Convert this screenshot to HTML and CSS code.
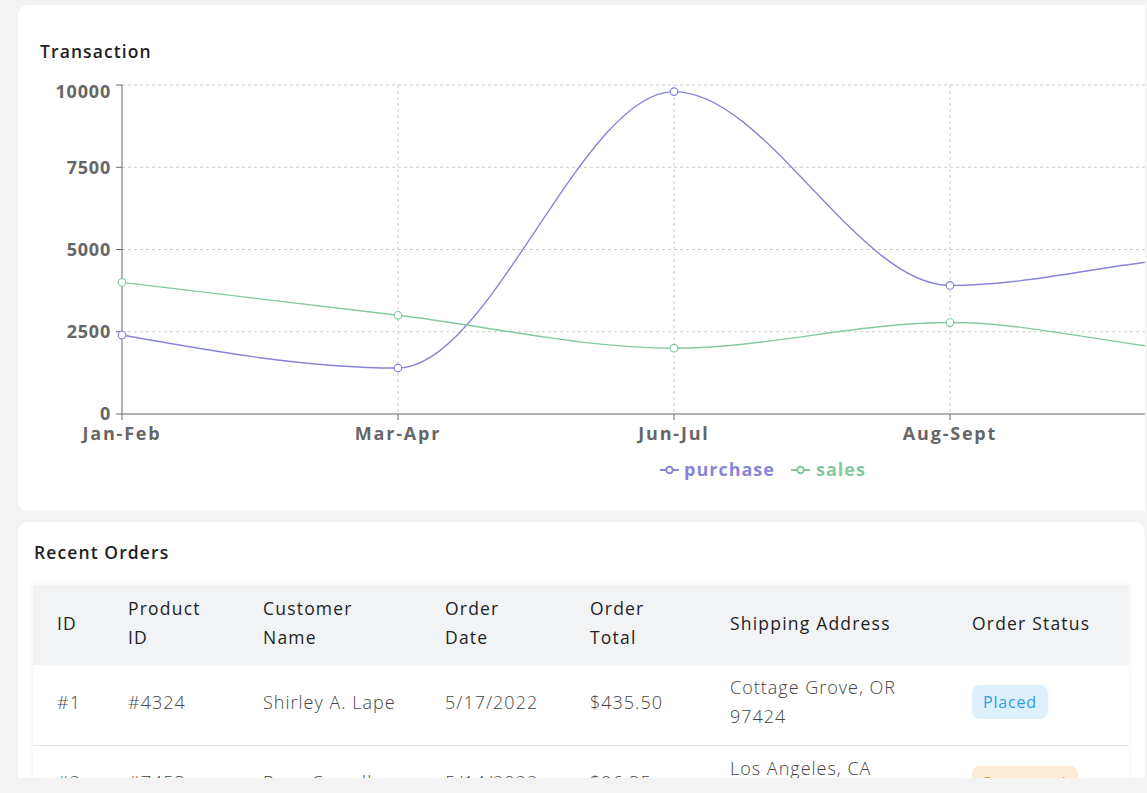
FILE: index.html
```html
<!DOCTYPE html>
<html lang="en">
<head>
<meta charset="utf-8">
<title>Dashboard</title>
<link rel="stylesheet" href="styles.css">
</head>
<body>
<div class="page">
  <div class="scroll">
    <section class="card card-chart">
      <h2 class="card-title">Transaction</h2>
      <svg class="chart" width="1800" height="430" viewBox="40 70 1800 430" xmlns="http://www.w3.org/2000/svg">
        <g class="grid" stroke="#ccc" stroke-dasharray="3 3" fill="none">
          <line x1="122" y1="85" x2="1840" y2="85"/>
          <line x1="122" y1="167.25" x2="1840" y2="167.25"/>
          <line x1="122" y1="249.5" x2="1840" y2="249.5"/>
          <line x1="122" y1="331.75" x2="1840" y2="331.75"/>
          <line x1="398" y1="85" x2="398" y2="414"/>
          <line x1="674" y1="85" x2="674" y2="414"/>
          <line x1="950" y1="85" x2="950" y2="414"/>
          <line x1="1226" y1="85" x2="1226" y2="414"/>
          <line x1="1502" y1="85" x2="1502" y2="414"/>
        </g>
        <g class="axis" stroke="#666" fill="none">
          <line x1="122" y1="85" x2="122" y2="414"/>
          <line x1="122" y1="414" x2="1840" y2="414"/>
          <line x1="116" y1="85" x2="122" y2="85"/>
          <line x1="116" y1="167.25" x2="122" y2="167.25"/>
          <line x1="116" y1="249.5" x2="122" y2="249.5"/>
          <line x1="116" y1="331.75" x2="122" y2="331.75"/>
          <line x1="116" y1="414" x2="122" y2="414"/>
          <line x1="122" y1="414" x2="122" y2="420"/>
          <line x1="398" y1="414" x2="398" y2="420"/>
          <line x1="674" y1="414" x2="674" y2="420"/>
          <line x1="950" y1="414" x2="950" y2="420"/>
          <line x1="1226" y1="414" x2="1226" y2="420"/>
        </g>
        <g class="ylabels">
          <text x="111" y="98">10000</text>
          <text x="111" y="174">7500</text>
          <text x="111" y="256">5000</text>
          <text x="111" y="338">2500</text>
          <text x="111" y="420">0</text>
        </g>
        <g class="xlabels">
          <text x="122" y="440">Jan-Feb</text>
          <text x="398" y="440">Mar-Apr</text>
          <text x="674" y="440">Jun-Jul</text>
          <text x="950" y="440">Aug-Sept</text>
          <text x="1226" y="440">Oct-Nov</text>
        </g>
        <path class="line-purchase" d="M122,335.04C214,351.53,306,368.01,398,368.01C490,368.01,582,91.58,674,91.58C766,91.58,858,285.43,950,285.43C1042,285.43,1134,256.08,1226,256.08C1318,256.08,1410,288.98,1502,288.98C1594,288.98,1686,280.76,1778,272.53"/>
        <path class="line-sales" d="M122,282.4C214,293.37,306,304.33,398,315.3C490,326.27,582,348.2,674,348.2C766,348.2,858,322.54,950,322.54C1042,322.54,1134,351.82,1226,351.82C1318,351.82,1410,344.14,1502,335.37C1594,326.6,1686,312.89,1778,299.18"/>
        <g class="dots-purchase">
          <circle cx="122" cy="335.04" r="3.8"/>
          <circle cx="398" cy="368.01" r="3.8"/>
          <circle cx="674" cy="91.58" r="3.8"/>
          <circle cx="950" cy="285.43" r="3.8"/>
          <circle cx="1226" cy="256.08" r="3.8"/>
        </g>
        <g class="dots-sales">
          <circle cx="122" cy="282.4" r="3.8"/>
          <circle cx="398" cy="315.3" r="3.8"/>
          <circle cx="674" cy="348.2" r="3.8"/>
          <circle cx="950" cy="322.54" r="3.8"/>
          <circle cx="1226" cy="351.82" r="3.8"/>
        </g>
        <g class="legend">
          <g class="legend-purchase">
            <line x1="660" y1="470" x2="679" y2="470"/>
            <circle cx="669.5" cy="470" r="3.2"/>
            <text x="684" y="476">purchase</text>
          </g>
          <g class="legend-sales">
            <line x1="791" y1="470" x2="810" y2="470"/>
            <circle cx="800.5" cy="470" r="3.2"/>
            <text x="816" y="476">sales</text>
          </g>
        </g>
      </svg>
    </section>

    <section class="card card-orders">
      <h2 class="card-title">Recent Orders</h2>
      <div class="table-wrap">
        <table class="orders">
          <colgroup>
            <col class="c-id"><col class="c-pid"><col class="c-cust"><col class="c-date"><col class="c-total"><col class="c-addr"><col class="c-status">
          </colgroup>
          <thead>
            <tr>
              <th>ID</th>
              <th>Product<br>ID</th>
              <th>Customer<br>Name</th>
              <th>Order<br>Date</th>
              <th>Order<br>Total</th>
              <th>Shipping Address</th>
              <th>Order Status</th>
            </tr>
          </thead>
          <tbody>
            <tr>
              <td>#1</td>
              <td>#4324</td>
              <td>Shirley A. Lape</td>
              <td>5/17/2022</td>
              <td>$435.50</td>
              <td>Cottage Grove, OR<br>97424</td>
              <td><span class="badge badge-placed">Placed</span></td>
            </tr>
            <tr>
              <td>#2</td>
              <td>#7453</td>
              <td>Ryan Carroll</td>
              <td>5/14/2022</td>
              <td>$96.35</td>
              <td>Los Angeles, CA<br>90017</td>
              <td><span class="badge badge-processed">Processed</span></td>
            </tr>
          </tbody>
        </table>
      </div>
    </section>
  </div>
</div>
</body>
</html>
```

FILE: styles.css
```css
html, body {
  margin: 0;
  padding: 0;
  overflow: hidden;
  background: #f3f3f3;
}

body {
  font-family: "Open Sans", "Noto Sans", sans-serif;
  color: #222;
}

.page {
  width: 1147px;
  height: 793px;
  padding: 5px 2px 0 18px;
  box-sizing: border-box;
  overflow: hidden;
}

.scroll {
  height: 773px;
  overflow: hidden;
  display: flex;
  flex-direction: column;
  gap: 11px;
}

.card {
  background: #fff;
  border-radius: 10px;
  flex-shrink: 0;
}

.card-chart {
  width: 1400px;
  height: 506px;
  box-sizing: border-box;
  padding: 33px 0 0 22px;
  overflow: hidden;
}

.card-title {
  margin: 0;
  font-size: 17.5px;
  line-height: 26px;
  font-weight: 600;
  color: #1f1f1f;
  letter-spacing: 1.1px;
}

.chart {
  display: block;
  margin-top: 6px;
  overflow: hidden;
}

.chart .line-purchase {
  fill: none;
  stroke: #8884d8;
  stroke-width: 1.4;
}

.chart .line-sales {
  fill: none;
  stroke: #82ca9d;
  stroke-width: 1.4;
}

.chart .dots-purchase circle {
  fill: #fff;
  stroke: #8884d8;
  stroke-width: 1.2;
}

.chart .dots-sales circle {
  fill: #fff;
  stroke: #82ca9d;
  stroke-width: 1.2;
}

.chart .ylabels text {
  font-family: "Open Sans", sans-serif;
  font-size: 18px;
  font-weight: 700;
  fill: #666;
  text-anchor: end;
  letter-spacing: 0.8px;
}

.chart .xlabels text {
  font-family: "Open Sans", sans-serif;
  font-size: 18px;
  font-weight: 700;
  fill: #666;
  text-anchor: middle;
  letter-spacing: 1.8px;
}

.chart .legend text {
  font-family: "Open Sans", sans-serif;
  font-size: 18px;
  font-weight: 700;
  letter-spacing: 1px;
}

.chart .legend-purchase line,
.chart .legend-purchase circle {
  stroke: #8884d8;
  stroke-width: 2;
  fill: #fff;
}

.chart .legend-purchase text {
  fill: #8884d8;
}

.chart .legend-sales line,
.chart .legend-sales circle {
  stroke: #82ca9d;
  stroke-width: 2;
  fill: #fff;
}

.chart .legend-sales text {
  fill: #82ca9d;
}

.card-orders {
  padding: 17px 16px 0 15px;
}

.card-orders .card-title {
  margin-bottom: 20px;
  margin-left: 1px;
}

.table-wrap {
  box-shadow: 0 0 5px rgba(0, 0, 0, 0.06);
}

.orders {
  width: 100%;
  border-collapse: collapse;
  table-layout: fixed;
}

.c-id { width: 71px; }
.c-pid { width: 135px; }
.c-cust { width: 182px; }
.c-date { width: 145px; }
.c-total { width: 140px; }
.c-addr { width: 242px; }

.orders thead tr {
  background: #f2f3f5;
}

.orders th {
  height: 80px;
  padding: 0 0 4px 24px;
  box-sizing: border-box;
  text-align: left;
  font-size: 17.5px;
  font-weight: 500;
  line-height: 29px;
  color: #1f1f1f;
  letter-spacing: 1.2px;
  vertical-align: middle;
  white-space: nowrap;
}

.orders td {
  height: 80px;
  padding: 0 0 5px 24px;
  box-sizing: border-box;
  font-size: 18px;
  font-weight: 300;
  line-height: 29px;
  color: #444;
  letter-spacing: 1px;
  vertical-align: middle;
  white-space: nowrap;
  border-bottom: 1px solid #e5e7eb;
}

.badge {
  display: inline-block;
  padding: 2px 11px;
  border-radius: 8px;
  font-size: 16px;
  line-height: 30px;
  font-weight: 400;
  letter-spacing: 0.8px;
}

.badge-placed {
  background: #dff0fd;
  color: #2b9ee0;
}

.badge-processed {
  background: #fdecd5;
  color: #f29a2e;
}
```
